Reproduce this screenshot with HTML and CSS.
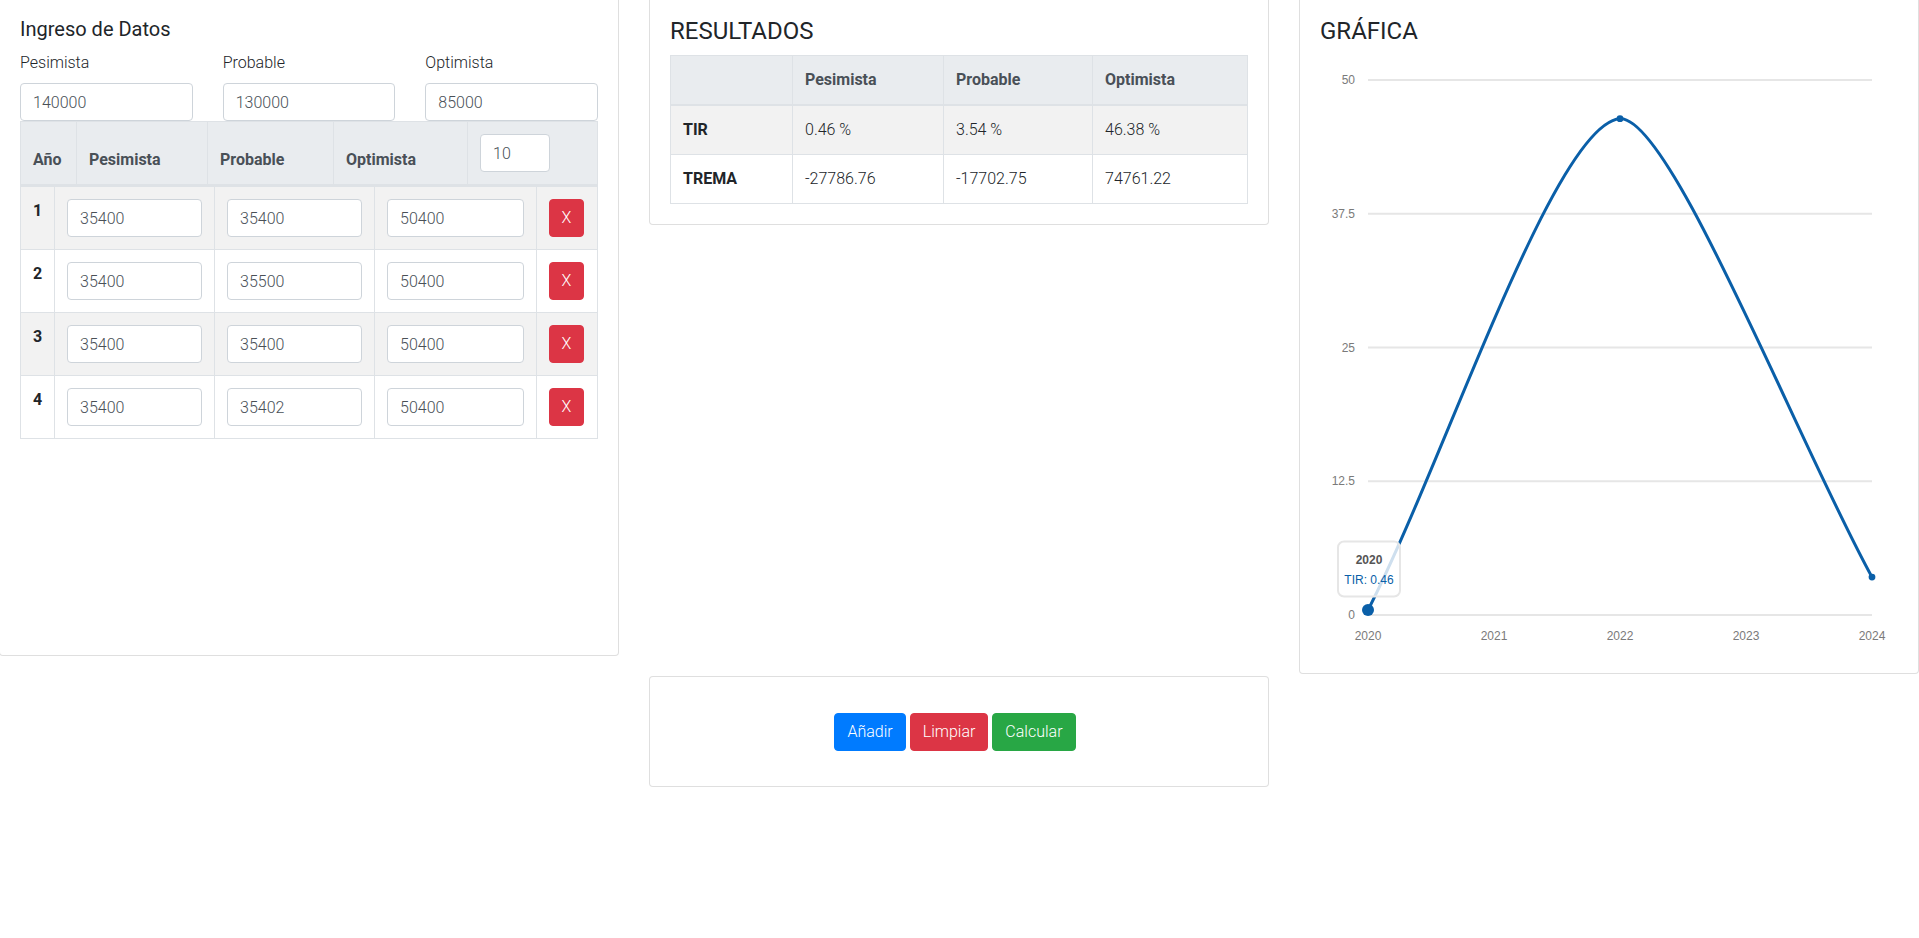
FILE: index.html
```html
<!DOCTYPE html>
<html lang="es">
<head>
<meta charset="utf-8">
<title>TIR</title>
<link rel="stylesheet" href="styles.css">
</head>
<body>
<div class="page">
  <section class="card card-data">
    <h5 class="title-sm">Ingreso de Datos</h5>
    <div class="fields">
      <div class="field">
        <label class="label">Pesimista</label>
        <input class="input" type="text" value="140000">
      </div>
      <div class="field">
        <label class="label">Probable</label>
        <input class="input" type="text" value="130000">
      </div>
      <div class="field">
        <label class="label">Optimista</label>
        <input class="input" type="text" value="85000">
      </div>
    </div>
    <table class="tbl">
      <thead>
        <tr>
          <th class="h-year">Año</th>
          <th class="h-pes">Pesimista</th>
          <th class="h-pro">Probable</th>
          <th class="h-opt">Optimista</th>
          <th class="h-last"><input class="input input-n" type="text" value="10"></th>
        </tr>
      </thead>
    </table>
    <table class="tbl">
      <tbody>
        <tr class="striped">
          <td class="c-year">1</td>
          <td class="c-val"><input class="input" type="text" value="35400"></td>
          <td class="c-val"><input class="input" type="text" value="35400"></td>
          <td class="c-val3"><input class="input" type="text" value="50400"></td>
          <td class="c-del"><button class="btn btn-x">X</button></td>
        </tr>
        <tr>
          <td class="c-year">2</td>
          <td class="c-val"><input class="input" type="text" value="35400"></td>
          <td class="c-val"><input class="input" type="text" value="35500"></td>
          <td class="c-val3"><input class="input" type="text" value="50400"></td>
          <td class="c-del"><button class="btn btn-x">X</button></td>
        </tr>
        <tr class="striped">
          <td class="c-year">3</td>
          <td class="c-val"><input class="input" type="text" value="35400"></td>
          <td class="c-val"><input class="input" type="text" value="35400"></td>
          <td class="c-val3"><input class="input" type="text" value="50400"></td>
          <td class="c-del"><button class="btn btn-x">X</button></td>
        </tr>
        <tr>
          <td class="c-year">4</td>
          <td class="c-val"><input class="input" type="text" value="35400"></td>
          <td class="c-val"><input class="input" type="text" value="35402"></td>
          <td class="c-val3"><input class="input" type="text" value="50400"></td>
          <td class="c-del"><button class="btn btn-x">X</button></td>
        </tr>
      </tbody>
    </table>
  </section>

  <section class="card card-results">
    <h4 class="title title-res">RESULTADOS</h4>
    <table class="tbl tbl-res">
      <thead>
        <tr>
          <th class="r1"></th>
          <th class="r2">Pesimista</th>
          <th class="r3">Probable</th>
          <th class="r4">Optimista</th>
        </tr>
      </thead>
      <tbody>
        <tr class="striped">
          <td class="strong">TIR</td>
          <td>0.46 %</td>
          <td>3.54 %</td>
          <td>46.38 %</td>
        </tr>
        <tr>
          <td class="strong">TREMA</td>
          <td>-27786.76</td>
          <td>-17702.75</td>
          <td>74761.22</td>
        </tr>
      </tbody>
    </table>
  </section>

  <section class="card card-chart">
    <h4 class="title">GRÁFICA</h4>
    <svg class="chart" width="578" height="599" viewBox="0 0 578 599">
      <g class="grid">
        <line x1="48" y1="26" x2="552" y2="26"/>
        <line x1="48" y1="159.75" x2="552" y2="159.75"/>
        <line x1="48" y1="293.5" x2="552" y2="293.5"/>
        <line x1="48" y1="427.25" x2="552" y2="427.25"/>
        <line x1="48" y1="561" x2="552" y2="561"/>
      </g>
      <g class="ylab">
        <text x="35" y="30">50</text>
        <text x="35" y="163.75">37.5</text>
        <text x="35" y="297.5">25</text>
        <text x="35" y="431.25">12.5</text>
        <text x="35" y="565">0</text>
      </g>
      <g class="xlab">
        <text x="48" y="586">2020</text>
        <text x="174" y="586">2021</text>
        <text x="300" y="586">2022</text>
        <text x="426" y="586">2023</text>
        <text x="552" y="586">2024</text>
      </g>
      <path class="series" d="M48,556.1 C123.6,408.7 235,68.9 300,64.7 C350,61.5 476.4,385.4 552,523.1"/>
      <circle class="dot" cx="48" cy="556.1" r="6"/>
      <circle class="dot" cx="300" cy="64.7" r="3.4"/>
      <circle class="dot" cx="552" cy="523.1" r="3.4"/>
      <rect class="tip" x="18" y="487.5" width="62" height="55" rx="6" ry="6"/>
      <text class="tip-title" x="49" y="509.5">2020</text>
      <text class="tip-body" x="49" y="530">TIR: 0.46</text>
    </svg>
  </section>

  <section class="card card-actions">
    <button class="btn btn-blue">Añadir</button>
    <button class="btn btn-red">Limpiar</button>
    <button class="btn btn-green">Calcular</button>
  </section>
</div>
</body>
</html>
```

FILE: styles.css
```css
* { box-sizing: border-box; }
html, body { margin: 0; padding: 0; background: #fff; }
body {
  font-family: Roboto, "Liberation Sans", sans-serif;
  font-size: 16px;
  line-height: 1.5;
  font-weight: 300;
  color: #212529;
}

.page {
  display: grid;
  grid-template-columns: repeat(3, 1fr);
  column-gap: 30px;
  row-gap: 2px;
  margin: -4px 0 0 -1px;
  align-items: start;
}

.card {
  background: #fff;
  border: 1px solid rgba(0, 0, 0, 0.125);
  border-radius: 4px;
  padding: 20px;
}
.card-data { height: 660px; }
.card-chart { height: 678px; }
.card-actions {
  grid-column: 2;
  display: flex;
  justify-content: center;
  gap: 4px;
  padding: 35.5px 28px 35.5px 20px;
}

.title-sm {
  font-size: 20px;
  line-height: 24px;
  font-weight: 400;
  margin: 0 0 10px;
}
.title {
  font-size: 24px;
  line-height: 28.8px;
  font-weight: 400;
  margin: 0 0 8px;
}
.title-res { margin-bottom: 9px; }

.fields {
  display: grid;
  grid-template-columns: repeat(3, 1fr);
  column-gap: 30px;
}
.label {
  display: block;
  margin-bottom: 8px;
}

.input {
  display: block;
  width: 100%;
  height: 38px;
  padding: 6px 12px;
  font-family: inherit;
  font-size: 16px;
  font-weight: 300;
  line-height: 24px;
  color: #495057;
  background: #fff;
  border: 1px solid #ced4da;
  border-radius: 4px;
}
.input-n { width: 70px; }

.tbl {
  width: 100%;
  border-collapse: collapse;
  table-layout: fixed;
  color: #212529;
}
.tbl th,
.tbl td {
  border: 1px solid #dee2e6;
  padding: 12px;
  text-align: left;
  vertical-align: top;
}
.tbl thead th {
  background: #e9ecef;
  color: #495057;
  font-weight: 700;
  vertical-align: bottom;
  border-bottom-width: 2px;
}
.striped { background: #f2f2f2; }

.h-year { width: 56px; }
.h-pes { width: 131px; }
.h-pro { width: 126px; }
.h-opt { width: 134px; }

.c-year { width: 34px; font-weight: 700; }
.c-val { width: 160px; }
.c-val3 { width: 162px; }

.r1 { width: 122px; }
.r2 { width: 151px; }
.r3 { width: 149px; }
.strong { font-weight: 700; }

.btn {
  display: inline-block;
  font-family: inherit;
  font-size: 16px;
  font-weight: 300;
  line-height: 24px;
  padding: 6px 12px;
  color: #fff;
  border: 1px solid transparent;
  border-radius: 4px;
  cursor: pointer;
}
.btn-x { background: #dc3545; border-color: #dc3545; height: 38px; width: 35px; padding: 6px 0; text-align: center; }
.btn-blue { background: #007bff; border-color: #007bff; }
.btn-red { background: #dc3545; border-color: #dc3545; }
.btn-green { background: #28a745; border-color: #28a745; }

.chart { display: block; }
.grid line { stroke: #e6e6e6; stroke-width: 2; }
.ylab text,
.xlab text {
  font-family: "Liberation Sans", Arial, sans-serif;
  font-size: 12px;
  fill: #7a7a7a;
}
.ylab text { text-anchor: end; }
.xlab text { text-anchor: middle; }
.series { fill: none; stroke: #0a5fa8; stroke-width: 3; }
.dot { fill: #0a5fa8; }
.tip { fill: rgba(255, 255, 255, 0.8); stroke: #e6e6e6; stroke-width: 2; }
.tip-title {
  font-family: "Liberation Sans", Arial, sans-serif;
  font-size: 12px;
  font-weight: 700;
  fill: #555;
  text-anchor: middle;
}
.tip-body {
  font-family: "Liberation Sans", Arial, sans-serif;
  font-size: 12px;
  fill: #0a5fa8;
  text-anchor: middle;
}
```
